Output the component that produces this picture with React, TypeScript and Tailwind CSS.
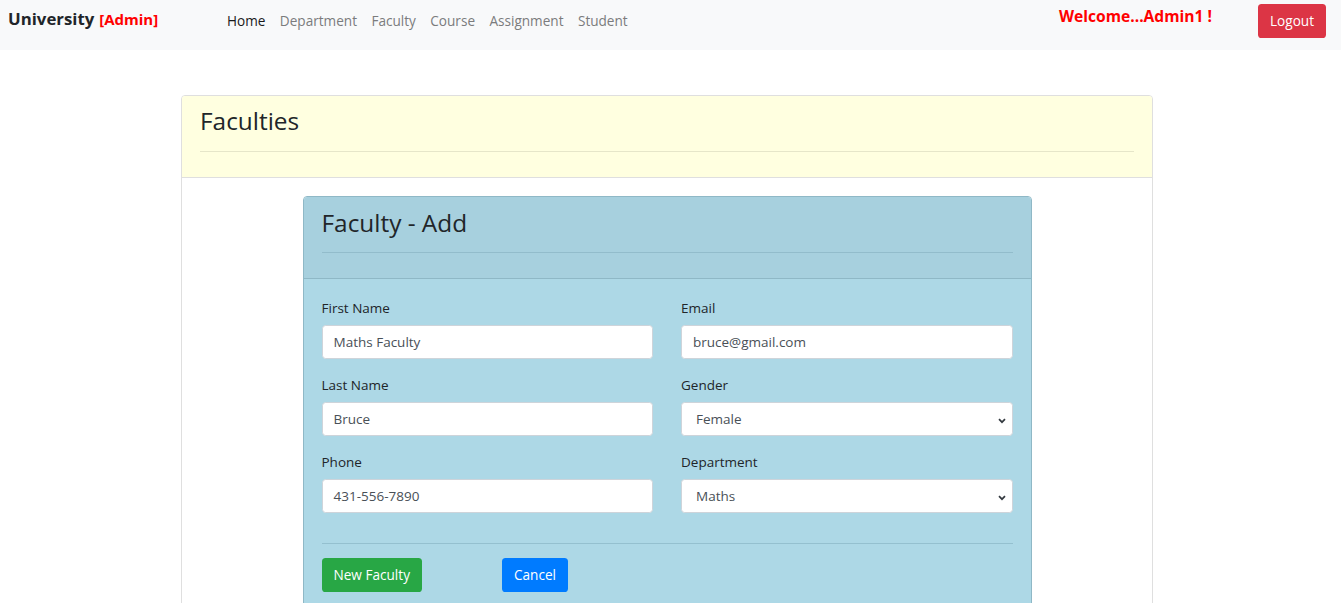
import React from "react";

const font = { fontFamily: '"Open Sans", "Noto Sans", sans-serif' };

function Chevron() {
  return (
    <svg width="8" height="6" viewBox="0 0 8 6" className="absolute right-[6px] top-[15px]">
      <path d="M1 1.2 L4 4.2 L7 1.2" fill="none" stroke="#343a40" strokeWidth="1.7" />
    </svg>
  );
}

function Field({ label, value, select }: { label: string; value: string; select?: boolean }) {
  return (
    <div className="mb-[15.4px]">
      <div className="text-[13.5px] leading-[21.6px] text-[#212529] mb-[6px]">{label}</div>
      <div className="relative h-[34px] bg-white border border-[#ced4da] rounded-[3.6px] flex items-center">
        <span className={`text-[13.5px] text-[#495057] ${select ? "pl-[14px]" : "pl-[11px]"}`}>{value}</span>
        {select && <Chevron />}
      </div>
    </div>
  );
}

export default function App() {
  return (
    <div className="min-h-screen bg-white" style={font}>
      <nav className="h-[50px] bg-[#f8f9fa] flex items-center pl-[8px] pr-[15px] pb-[8px]">
        <div className="flex items-baseline w-[219px] -mt-[5px]">
          <span className="text-[16.8px] font-bold text-[#212529]">University</span>
          <span className="ml-[5px] text-[15px] font-bold text-[#ff0000]">[Admin]</span>
        </div>
        <div className="flex items-center gap-[14.4px] text-[13.6px]">
          <span className="text-[#1a1a1a]">Home</span>
          <span className="text-[#7b7c7d]">Department</span>
          <span className="text-[#7b7c7d]">Faculty</span>
          <span className="text-[#7b7c7d]">Course</span>
          <span className="text-[#7b7c7d]">Assignment</span>
          <span className="text-[#7b7c7d]">Student</span>
        </div>
        <div className="flex-1" />
        <span className="text-[15.6px] font-bold text-[#ff0000] mr-[46px] -mt-[8px]">Welcome...Admin1 !</span>
        <button className="h-[34px] px-[12px] rounded-[3.6px] bg-[#dc3545] text-white text-[13.6px]">Logout</button>
      </nav>

      <div className="ml-[181px] w-[972px] mt-[45px] border border-[#dfdfdf] rounded-[4px] overflow-hidden">
        <div className="bg-[#ffffe0] border-b border-[#dfdfdf] px-[18px] pt-[10px] pb-[25px]">
          <h3 className="text-[24.4px] leading-[30px] font-medium text-[#212529]">Faculties</h3>
          <div className="mt-[15.4px] border-t border-[#e6e6c9]" />
        </div>
        <div className="p-[18px] pb-[40px]">
          <div className="mx-auto w-[729px] border border-[#8fb8c6] rounded-[4px] overflow-hidden">
            <div className="bg-[#a7d0de] border-b border-[#8fb8c6] px-[18px] pt-[11px] pb-[25px]">
              <h3 className="text-[24.4px] leading-[30px] font-medium text-[#212529]">Faculty - Add</h3>
              <div className="mt-[13.4px] border-t border-[#92bccb]" />
            </div>
            <div className="bg-[#add8e6] px-[18px] pt-[19px] pb-[30px]">
              <div className="grid grid-cols-2 gap-x-[28px]">
                <div>
                  <Field label="First Name" value="Maths Faculty" />
                  <Field label="Last Name" value="Bruce" />
                  <Field label="Phone" value="431-556-7890" />
                </div>
                <div>
                  <Field label="Email" value="bruce@gmail.com" />
                  <Field label="Gender" value="Female" select />
                  <Field label="Department" value="Maths" select />
                </div>
              </div>
              <div className="mt-[14px] mb-[14px] border-t border-[#94c0cf]" />
              <div className="flex">
                <button className="h-[34px] px-[12px] rounded-[3.6px] bg-[#28a745] text-white text-[13.6px]">New Faculty</button>
                <button className="ml-[80px] h-[34px] px-[12px] rounded-[3.6px] bg-[#007bff] text-white text-[13.6px]">Cancel</button>
              </div>
            </div>
          </div>
        </div>
      </div>
    </div>
  );
}
